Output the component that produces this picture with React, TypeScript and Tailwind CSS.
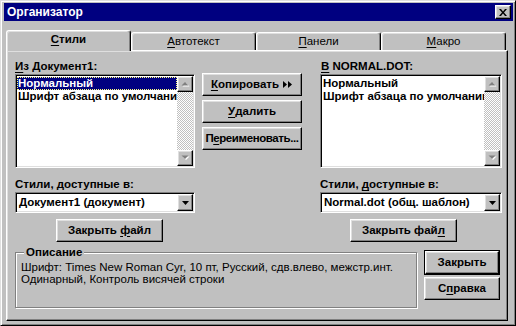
import type { ReactNode } from 'react';

const raised =
  'bg-[#c0c0c0] border border-t-white border-l-white border-r-black border-b-black shadow-[inset_-1px_-1px_0_#808080,inset_1px_1px_0_#dfdfdf]';
const sunken =
  'border border-t-[#808080] border-l-[#808080] border-r-white border-b-white shadow-[inset_1px_1px_0_#000,inset_-1px_-1px_0_#dfdfdf]';

function U({ children }: { children: ReactNode }) {
  return <span className="underline underline-offset-[2px] decoration-1">{children}</span>;
}

function GrayArrow({ up }: { up?: boolean }) {
  return (
    <svg width="9" height="6" viewBox="0 0 9 6">
      {up ? (
        <>
          <polygon points="1.5,5.5 8.5,5.5 5,2" fill="#fff" />
          <polygon points="0.5,4.5 7.5,4.5 4,1" fill="#808080" />
        </>
      ) : (
        <>
          <polygon points="1.5,1.5 8.5,1.5 5,5" fill="#fff" />
          <polygon points="0.5,0.5 7.5,0.5 4,4" fill="#808080" />
        </>
      )}
    </svg>
  );
}

function ScrollBar() {
  return (
    <div className="flex w-[16px] flex-col">
      <div className={`${raised} flex h-[16px] w-[16px] items-center justify-center`}>
        <GrayArrow up />
      </div>
      <div className="flex-1 bg-[repeating-conic-gradient(#c0c0c0_0_25%,#fff_0_50%)] bg-[length:2px_2px]" />
      <div className={`${raised} flex h-[16px] w-[16px] items-center justify-center`}>
        <GrayArrow />
      </div>
    </div>
  );
}

function ListBox({ focused }: { focused?: boolean }) {
  return (
    <div className={`${sunken} flex h-[94px] bg-white p-[1px]`}>
      <div className="min-w-0 flex-1 overflow-hidden whitespace-nowrap pt-[1px] text-black">
        <div
          className={
            focused
              ? 'h-[13px] bg-[#000080] pl-[1px] leading-[13px] text-white outline-1 -outline-offset-1 outline-dotted outline-[#ffff80]'
              : 'h-[13px] pl-[1px] leading-[13px]'
          }
        >
          Нормальный
        </div>
        <div className="h-[13px] pl-[1px] leading-[13px]">Шрифт абзаца по умолчанию</div>
      </div>
      <ScrollBar />
    </div>
  );
}

function ComboBox({ value }: { value: string }) {
  return (
    <div className={`${sunken} flex h-[21px] items-stretch bg-white p-[1px]`}>
      <div className="min-w-0 flex-1 overflow-hidden whitespace-nowrap pl-[2px] leading-[17px] text-black">
        {value}
      </div>
      <div className={`${raised} flex w-[16px] items-center justify-center`}>
        <svg width="7" height="4" viewBox="0 0 7 4">
          <polygon points="0,0 7,0 3.5,4" fill="#000" />
        </svg>
      </div>
    </div>
  );
}

function Button({ children, className = '' }: { children: ReactNode; className?: string }) {
  return (
    <div className={`${raised} flex h-[23px] items-center justify-center whitespace-nowrap ${className}`}>
      <span className="flex items-center">{children}</span>
    </div>
  );
}

function Tab({ label, active }: { label: ReactNode; active?: boolean }) {
  return (
    <div
      className={
        active
          ? 'flex h-[21px] w-[125px] items-center justify-center rounded-t-[3px] border-l border-t border-r border-l-white border-t-white border-r-black bg-[#c0c0c0] pb-[2px] font-bold shadow-[inset_-1px_0_0_#808080,inset_1px_1px_0_#dfdfdf]'
          : 'mb-[1px] flex h-[18px] w-[125px] items-center justify-center rounded-t-[3px] border-l border-t border-r border-l-white border-t-white border-r-black bg-[#c0c0c0] font-normal shadow-[inset_-1px_0_0_#808080,inset_1px_1px_0_#dfdfdf]'
      }
    >
      <span>{label}</span>
    </div>
  );
}

export default function App() {
  return (
    <div className="h-[326px] w-[516px] border border-t-[#dfdfdf] border-l-[#dfdfdf] border-r-black border-b-black bg-[#c0c0c0] px-[2px] pt-[1px] font-['Liberation_Sans',Arial,sans-serif] text-[11.5px] font-bold text-black shadow-[inset_1px_1px_0_#fff,inset_-1px_-1px_0_#808080]">
      {/* title bar */}
      <div className="mt-[1px] ml-[1px] flex h-[18px] items-center justify-between bg-[#000080] pl-[3px] pr-[2px] text-[12px] text-white">
        <span>Организатор</span>
        <div className={`${raised} flex h-[14px] w-[16px] items-center justify-center`}>
          <svg width="8" height="7" viewBox="0 0 8 7">
            <path d="M0 0h2l2 2.5L6 0h2L5 3.5 8 7H6L4 4.5 2 7H0l3-3.5z" fill="#000" />
          </svg>
        </div>
      </div>

      {/* tabs */}
      <div className="relative z-10 mt-[9px] ml-[3px] flex h-[21px] items-end">
        <Tab active label={<><U>С</U>тили</>} />
        <Tab label={<><U>А</U>втотекст</>} />
        <Tab label={<><U>П</U>анели</>} />
        <Tab label={<><U>М</U>акро</>} />
      </div>

      {/* tab body */}
      <div className="-mt-[1px] ml-[3px] h-[271px] w-[502px] border border-t-white border-l-white border-r-black border-b-black pt-[8px] pl-[8px] shadow-[inset_-1px_-1px_0_#808080,inset_1px_1px_0_#dfdfdf]">
        <div className="flex">
          {/* left column */}
          <div className="flex w-[180px] flex-col">
            <div className="h-[15px] leading-[15px]">
              <U>И</U>з Документ1:
            </div>
            <ListBox focused />
            <div className="mt-[8px] h-[16px] leading-[16px]">Стили, доступные в:</div>
            <ComboBox value="Документ1 (документ)" />
            <Button className="mt-[6px] ml-[41px] w-[107px]">
              <span>
                Закрыть <U>ф</U>айл
              </span>
            </Button>
          </div>

          {/* middle buttons */}
          <div className="ml-[7px] flex w-[100px] flex-col gap-[4px] pt-[14px]">
            <Button>
              <U>К</U>опировать
              <svg className="ml-[4px]" width="10" height="7" viewBox="0 0 10 7">
                <polygon points="0,0 4,3.5 0,7" fill="#000" />
                <polygon points="5,0 9,3.5 5,7" fill="#000" />
              </svg>
            </Button>
            <Button>
              <U>У</U>далить
            </Button>
            <Button className="tracking-[-0.4px]">
              <span>
                П<U>е</U>реименовать...
              </span>
            </Button>
          </div>

          {/* right column */}
          <div className="ml-[18px] flex w-[182px] flex-col">
            <div className="h-[15px] pl-[1px] leading-[15px]">
              <U>В</U> NORMAL.DOT:
            </div>
            <ListBox />
            <div className="mt-[8px] h-[16px] leading-[16px]">
              Стили, <U>д</U>оступные в:
            </div>
            <ComboBox value="Normal.dot (общ. шаблон)" />
            <Button className="mt-[6px] ml-[30px] w-[107px]">
              <span>
                Закрыть фай<U>л</U>
              </span>
            </Button>
          </div>
        </div>

        {/* description + buttons */}
        <div className="mt-[3px] flex items-start">
          <fieldset className="h-[63px] w-[402px] border border-[#808080] px-[5px] shadow-[1px_1px_0_#fff,inset_1px_1px_0_#fff]">
            <legend className="ml-[3px] bg-[#c0c0c0] px-[2px] leading-[14px]">Описание</legend>
            <div className="pt-[2px] font-normal leading-[12px]">
              Шрифт: Times New Roman Cyr, 10 пт, Русский, сдв.влево, межстр.инт.
              <br />
              Одинарный, Контроль висячей строки
            </div>
          </fieldset>
          <div className="ml-[7px] mt-[5px] flex w-[76px] flex-col gap-[2px]">
            <div className="border border-black">
              <Button className="h-[21px]">Закрыть</Button>
            </div>
            <Button>
              <span>
                С<U>п</U>равка
              </span>
            </Button>
          </div>
        </div>
      </div>
    </div>
  );
}
